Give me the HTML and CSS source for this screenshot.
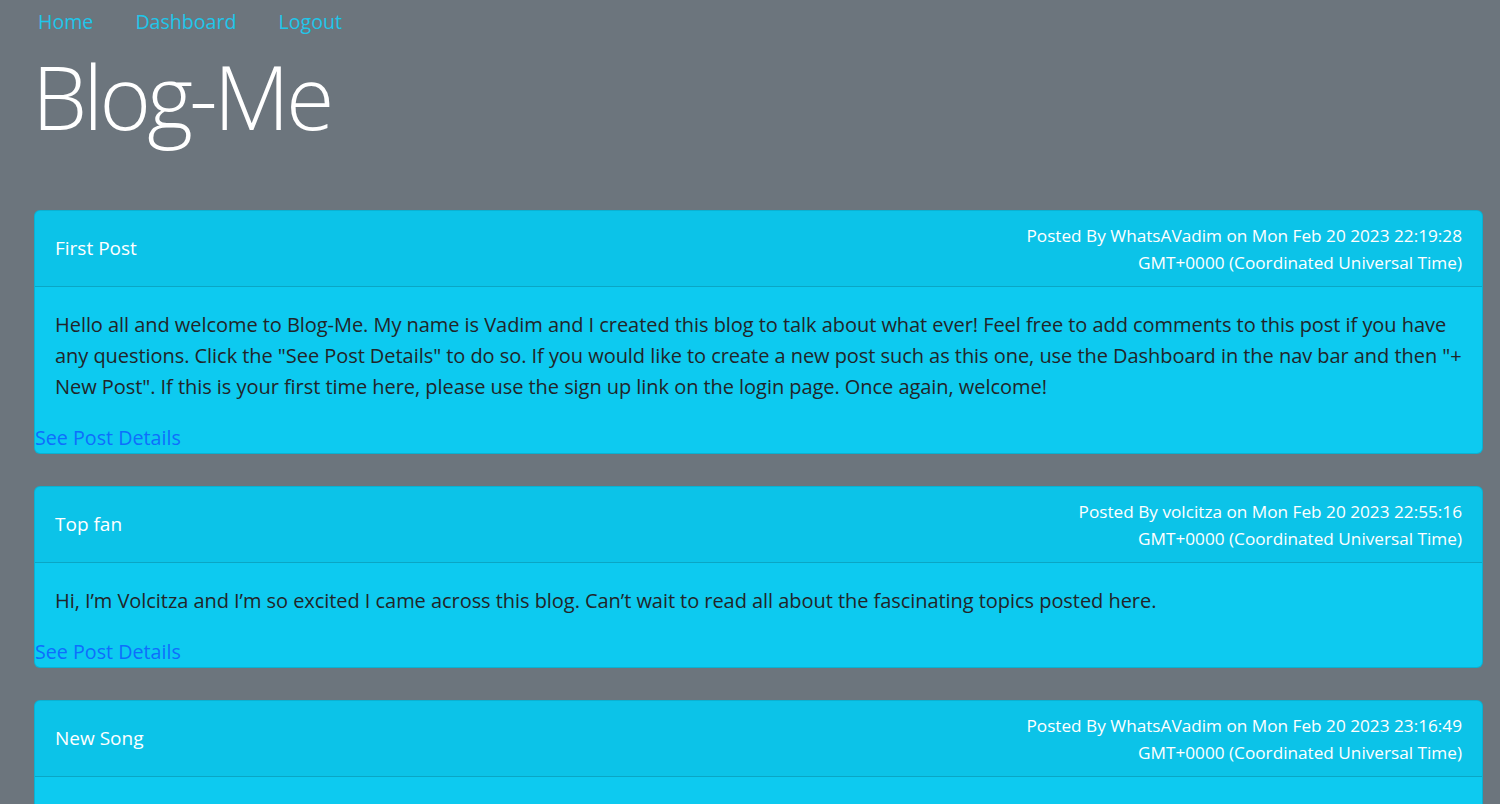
FILE: index.html
```html
<!DOCTYPE html>
<html lang="en">
<head>
<meta charset="utf-8">
<title>Blog-Me</title>
<link rel="stylesheet" href="styles.css">
</head>
<body>
<nav class="topnav">
  <a class="nav-link" href="#">Home</a>
  <a class="nav-link" href="#">Dashboard</a>
  <a class="nav-link" href="#">Logout</a>
</nav>
<h1 class="brand">Blog-Me</h1>
<main class="posts">
  <article class="card">
    <header class="card-header">
      <h2 class="card-title">First Post</h2>
      <p class="meta">Posted By WhatsAVadim on Mon Feb 20 2023 22:19:28<br>GMT+0000 (Coordinated Universal Time)</p>
    </header>
    <div class="card-body">
      <p>Hello all and welcome to Blog-Me. My name is Vadim and I created this blog to talk about what ever! Feel free to add comments to this post if you have any questions. Click the "See Post Details" to do so. If you would like to create a new post such as this one, use the Dashboard in the nav bar and then "+ New Post". If this is your first time here, please use the sign up link on the login page. Once again, welcome!</p>
    </div>
    <a class="details" href="#">See Post Details</a>
  </article>
  <article class="card">
    <header class="card-header">
      <h2 class="card-title">Top fan</h2>
      <p class="meta">Posted By volcitza on Mon Feb 20 2023 22:55:16<br>GMT+0000 (Coordinated Universal Time)</p>
    </header>
    <div class="card-body">
      <p>Hi, I’m Volcitza and I’m so excited I came across this blog. Can’t wait to read all about the fascinating topics posted here.</p>
    </div>
    <a class="details" href="#">See Post Details</a>
  </article>
  <article class="card">
    <header class="card-header">
      <h2 class="card-title">New Song</h2>
      <p class="meta">Posted By WhatsAVadim on Mon Feb 20 2023 23:16:49<br>GMT+0000 (Coordinated Universal Time)</p>
    </header>
    <div class="card-body card-body-empty"></div>
  </article>
</main>
</body>
</html>
```

FILE: styles.css
```css
* { box-sizing: border-box; }

html, body {
  margin: 0;
  padding: 0;
  background: #6c757d;
}

body {
  font-family: "Open Sans", "Noto Sans", sans-serif;
  color: #212529;
  line-height: 1.5;
  overflow: hidden;
}

.topnav {
  display: flex;
  gap: 42px;
  padding: 7px 0 0 38px;
  height: 45px;
}

.nav-link {
  color: #1fc6ea;
  text-decoration: none;
  font-size: 19.6px;
  line-height: 30px;
}

.brand {
  margin: 0 0 0 32px;
  font-size: 88px;
  font-weight: 300;
  color: #fff;
  line-height: 102px;
  height: 165px;
  letter-spacing: -3.8px;
}

.posts {
  display: flex;
  flex-direction: column;
  gap: 32px;
  margin: 0 17px 0 34px;
}

.card {
  background: #0dcaf0;
  border: 1px solid rgba(0, 0, 0, 0.12);
  border-radius: 6px;
  display: flex;
  flex-direction: column;
  overflow: hidden;
}

.card-header {
  display: flex;
  justify-content: space-between;
  align-items: center;
  padding: 10px 20px 10px 20px;
  min-height: 76px;
  background: rgba(0, 0, 0, 0.03);
  border-bottom: 1px solid rgba(0, 0, 0, 0.15);
  color: #fff;
}

.card-title {
  margin: 0;
  font-size: 19px;
  font-weight: 400;
}

.meta {
  margin: 0;
  text-align: right;
  font-size: 17.2px;
  line-height: 27px;
}

.card-body {
  padding: 22px 20px 21px 20px;
}

.card-body-empty {
  height: 60px;
}

.card-body p {
  margin: 0;
  font-size: 20px;
  line-height: 31px;
  letter-spacing: -0.05px;
}

.details {
  color: #0d6efd;
  text-decoration: none;
  font-size: 19.7px;
  line-height: 30px;
}
```
